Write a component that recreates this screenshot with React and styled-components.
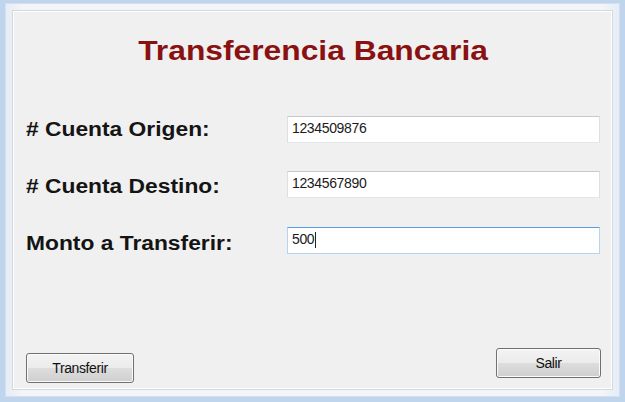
import React from 'react';
import styled, { createGlobalStyle } from 'styled-components';

const GlobalStyle = createGlobalStyle`
  html, body {
    margin: 0;
    padding: 0;
  }
  body {
    font-family: "Liberation Sans", Arial, sans-serif;
  }
`;

const Frame = styled.div`
  width: 625px;
  height: 402px;
  box-sizing: border-box;
  background: #bfd5ee;
  padding: 3px 5px 5px 5px;
`;

const Chrome = styled.div`
  height: 100%;
  box-sizing: border-box;
  background: linear-gradient(90deg, #e6edf5, #f3f5f8 3%, #f3f5f8 97%, #e6edf5);
  border: 1px solid #d4e0ee;
  padding: 6px;
`;

const Panel = styled.div`
  height: 100%;
  box-sizing: border-box;
  background: #f0f0f0;
  border: 1px solid #d3d8de;
  box-shadow: inset 1px 1px 0 #ffffff, inset -1px -1px 0 #ffffff;
  display: flex;
  flex-direction: column;
  padding: 23px 11px 6px 13px;
`;

const Title = styled.h1`
  margin: 0;
  text-align: center;
  font-size: 28px;
  font-weight: bold;
  line-height: 34px;
  color: #8a1111;
`;

const Stretch = styled.span`
  display: inline-block;
  white-space: nowrap;
  transform: scaleX(${p => p.$x});
  transform-origin: ${p => p.$origin || 'left'} center;
`;

const Form = styled.div`
  display: grid;
  grid-template-columns: 261px 313px;
  row-gap: 28px;
  margin-top: 48px;
  align-items: center;
`;

const Label = styled.label`
  font-size: 20px;
  font-weight: bold;
  color: #141414;
  padding-top: ${p => p.$drop || 0}px;
`;

const Field = styled.div`
  position: relative;
  box-sizing: border-box;
  width: 313px;
  height: 27px;
  background: #fff;
  border-style: solid;
  border-width: 1px;
  border-color: #c6c9ce #dcdfe3 #e3e6e9 #dcdfe3;
  display: flex;
`;

const ActiveField = styled(Field)`
  border-color: #569de5 #b5d3f3 #b5d3f3 #b5d3f3;
`;

const Input = styled.input`
  flex: 1;
  min-width: 0;
  margin: 0;
  border: 0;
  background: transparent;
  font-family: "Liberation Sans", Arial, sans-serif;
  font-size: 14px;
  letter-spacing: -0.35px;
  color: #1a1a1a;
  padding: 0 4px 3px 4px;
  outline: none;
`;

const Caret = styled.span`
  position: absolute;
  left: 27px;
  top: 4px;
  width: 1px;
  height: 16px;
  background: #222;
`;

const Footer = styled.div`
  margin-top: auto;
  display: flex;
  justify-content: space-between;
  align-items: flex-end;
`;

const Button = styled.button`
  box-sizing: border-box;
  width: ${p => p.$w}px;
  height: 30px;
  margin-bottom: ${p => p.$lift || 0}px;
  border: 1px solid #707070;
  border-radius: 3px;
  background: linear-gradient(#f3f3f3 0%, #ebebeb 50%, #dddddd 51%, #cfcfcf 100%);
  box-shadow: inset 0 0 0 1px #fbfbfb;
  font-family: "Liberation Sans", Arial, sans-serif;
  font-size: 14px;
  letter-spacing: -0.4px;
  color: #111;
  padding: 0;
`;

export default function App() {
  return (
    <>
      <GlobalStyle />
      <Frame>
        <Chrome>
          <Panel>
            <Title>
              <Stretch $x={1.135} $origin="center">Transferencia Bancaria</Stretch>
            </Title>
            <Form>
              <Label><Stretch $x={1.14}>&#35; Cuenta Origen:</Stretch></Label>
              <Field>
                <Input defaultValue="1234509876" />
              </Field>
              <Label $drop={4}><Stretch $x={1.14}>&#35; Cuenta Destino:</Stretch></Label>
              <Field>
                <Input defaultValue="1234567890" />
              </Field>
              <Label $drop={6}><Stretch $x={1.14}>Monto a Transferir:</Stretch></Label>
              <ActiveField>
                <Input defaultValue="500" />
                <Caret />
              </ActiveField>
            </Form>
            <Footer>
              <Button $w={108}>Transferir</Button>
              <Button $w={105} $lift={5}>Salir</Button>
            </Footer>
          </Panel>
        </Chrome>
      </Frame>
    </>
  );
}
